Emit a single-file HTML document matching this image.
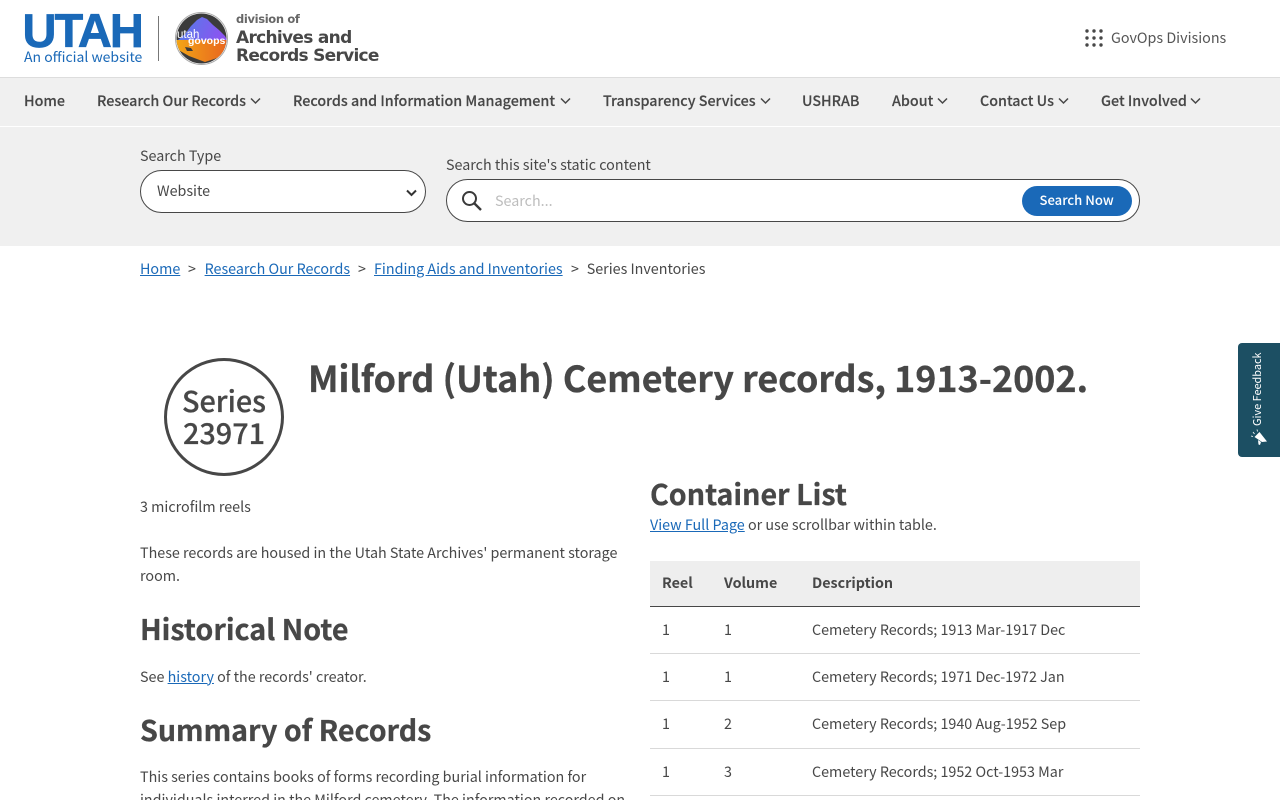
<!DOCTYPE html>
<html lang="en"><head><meta charset="utf-8"><title>Milford (Utah) Cemetery records, 1913-2002.</title>
<style>
html,body{margin:0;padding:0;background:#fff;width:1280px;height:800px;overflow:hidden}
body{position:relative;font-family:"Noto Sans CJK JP","Liberation Sans",sans-serif;font-size:14.32px;color:#474747}
.t{position:absolute;white-space:nowrap;line-height:24px;height:24px}
a{color:#1a69b8;text-decoration:underline}
.n{font-weight:500;color:#474747;top:89px;-webkit-text-stroke:.15px #474747}
.b{font-weight:700;color:#474747;-webkit-text-stroke:.3px #474747}
.box{position:absolute}
svg{position:absolute;overflow:visible}
.l{position:absolute;height:1px;left:650px;width:490px;background:#d9d9d9}
</style></head><body>
<div class="t" style="left:22.5px;top:8px;font:700 47px/46px 'Liberation Sans',sans-serif;height:46px;color:#1a69b8;letter-spacing:-1.9px;-webkit-text-stroke:.7px #1a69b8">UTAH</div>
<div class="t" style="left:24px;top:45px;color:#1a69b8;font-size:14px">An official website</div>
<div class="box" style="left:158px;top:16px;width:1px;height:45px;background:#777"></div>
<svg style="left:175px;top:12px" width="53" height="53" viewBox="0 0 53 53">
<defs><clipPath id="c"><circle cx="26.5" cy="26.5" r="25"/></clipPath><linearGradient id="g" x1="0" y1="0" x2="1" y2="0.2"><stop offset="0" stop-color="#4f7fe8"/><stop offset="1" stop-color="#8a55f0"/></linearGradient><linearGradient id="o" x1="0" y1="0" x2="1" y2="0"><stop offset="0" stop-color="#f3a716"/><stop offset="1" stop-color="#e8641f"/></linearGradient></defs>
<circle cx="26.5" cy="26.5" r="26" fill="#fff" stroke="#aaa" stroke-width="1"/>
<g clip-path="url(#c)"><rect width="53" height="53" fill="#3b3b3b"/>
<path d="M3 28L10 22 16 14 22 8 27 5 32 7 38 13 44 18 50 24 52 28Z" fill="url(#g)"/>
<path d="M0 28H53V39L42 46 30 50 14 44 0 36Z" fill="url(#o)"/>
<path d="M10 35l6 1 2 3-6 0z" fill="#3b3b3b"/></g></svg>
<div class="t" style="left:177px;top:28px;font:400 11.500px/14px 'Liberation Sans',sans-serif;height:14px;color:#fff">utah</div>
<div class="t" style="left:188px;top:34px;font:700 10.500px/14px 'Liberation Sans',sans-serif;height:14px;color:#fff">govops</div>
<div class="t" style="left:236px;top:12px;font:700 11.500px/15px 'DejaVu Sans',sans-serif;height:15px;color:#666;letter-spacing:-.35px">division of</div>
<div class="t" style="left:236px;top:28px;font:700 17px/20px 'DejaVu Sans',sans-serif;height:20px;color:#474747;letter-spacing:-.7px">Archives and</div>
<div class="t" style="left:236px;top:46px;font:700 17px/20px 'DejaVu Sans',sans-serif;height:20px;color:#474747;letter-spacing:-.73px">Records Service</div>
<svg style="left:1085px;top:29px" width="18" height="18" fill="#474747"><circle cx="2" cy="2" r="1.7"/><circle cx="9" cy="2" r="1.7"/><circle cx="16" cy="2" r="1.7"/><circle cx="2" cy="9" r="1.7"/><circle cx="9" cy="9" r="1.7"/><circle cx="16" cy="9" r="1.7"/><circle cx="2" cy="16" r="1.7"/><circle cx="9" cy="16" r="1.7"/><circle cx="16" cy="16" r="1.7"/></svg>
<div class="t" style="left:1111px;top:26px;color:#555">GovOps Divisions</div>

<div class="box" style="left:0;top:77px;width:1280px;height:49px;background:#f0f0f0;border-top:1px solid #ddd;box-sizing:border-box"></div>
<div class="box" style="left:0;top:127px;width:1280px;height:119px;background:#f0f0f0"></div>
<div class="t n" style="left:24px">Home</div>
<div class="t n" style="left:97px">Research Our Records</div>
<svg style="left:250px;top:97px" width="11" height="8" fill="none" stroke="#474747" stroke-width="1.5"><path d="M1 1.500l4.500 4.500 4.500-4.500"/></svg>
<div class="t n" style="left:293px">Records and Information Management</div>
<svg style="left:560px;top:97px" width="11" height="8" fill="none" stroke="#474747" stroke-width="1.5"><path d="M1 1.500l4.500 4.500 4.500-4.500"/></svg>
<div class="t n" style="left:603px">Transparency Services</div>
<svg style="left:760px;top:97px" width="11" height="8" fill="none" stroke="#474747" stroke-width="1.5"><path d="M1 1.500l4.500 4.500 4.500-4.500"/></svg>
<div class="t n" style="left:802px">USHRAB</div>
<div class="t n" style="left:892px">About</div>
<svg style="left:937px;top:97px" width="11" height="8" fill="none" stroke="#474747" stroke-width="1.5"><path d="M1 1.500l4.500 4.500 4.500-4.500"/></svg>
<div class="t n" style="left:980px">Contact Us</div>
<svg style="left:1058px;top:97px" width="11" height="8" fill="none" stroke="#474747" stroke-width="1.5"><path d="M1 1.500l4.500 4.500 4.500-4.500"/></svg>
<div class="t n" style="left:1101px">Get Involved</div>
<svg style="left:1190px;top:97px" width="11" height="8" fill="none" stroke="#474747" stroke-width="1.5"><path d="M1 1.500l4.500 4.500 4.500-4.500"/></svg>

<div class="t" style="left:140px;top:144px">Search Type</div>
<div class="box" style="left:140px;top:170px;width:286px;height:43px;box-sizing:border-box;background:#fff;border:1px solid #474747;border-radius:22px"></div>
<div class="t" style="left:157px;top:179px">Website</div>
<svg style="left:406px;top:189px" width="11" height="8" fill="none" stroke="#333" stroke-width="2"><path d="M1 1.500l4.500 4.500 4.500-4.500"/></svg>
<div class="t" style="left:446px;top:153px">Search this site's static content</div>
<div class="box" style="left:446px;top:179px;width:694px;height:43px;box-sizing:border-box;background:#fff;border:1px solid #474747;border-radius:22px"></div>
<svg style="left:461px;top:190px" width="22" height="22" fill="none" stroke="#3a3a3a" stroke-width="2"><circle cx="8.500" cy="8.500" r="6.500"/><path d="M13.500 13.500l6.500 6.500" stroke-width="2.400"/></svg>
<div class="t" style="left:495px;top:189px;color:#bdbdbd">Search...</div>
<div class="box" style="left:1022px;top:186px;width:110px;height:30px;border-radius:15px;background:#1a69b8"></div>
<div class="t" style="left:1039.500px;top:188px;color:#fff;font-weight:500;font-size:13.100px">Search Now</div>

<div class="t" style="left:140px;top:257px"><a href="#">Home</a></div>
<div class="t" style="left:188px;top:257px">&gt;</div>
<div class="t" style="left:204.600px;top:257px"><a href="#">Research Our Records</a></div>
<div class="t" style="left:358px;top:257px">&gt;</div>
<div class="t" style="left:374px;top:257px"><a href="#">Finding Aids and Inventories</a></div>
<div class="t" style="left:571px;top:257px">&gt;</div>
<div class="t" style="left:586.700px;top:257px">Series Inventories</div>

<div class="box" style="left:164px;top:358px;width:120px;height:118px;box-sizing:border-box;border:3px solid #474747;border-radius:50%"></div>
<div class="t" style="left:164px;width:120px;text-align:center;top:385px;font-size:28.800px;line-height:32px;height:32px;font-weight:500;-webkit-text-stroke:.25px #474747">Series</div>
<div class="t" style="left:164px;width:120px;text-align:center;top:417px;font-size:28.800px;line-height:32px;height:32px;font-weight:500;-webkit-text-stroke:.25px #474747">23971</div>
<div class="t b" style="left:308px;top:353px;font-size:35.850px;line-height:48px;height:48px">Milford (Utah) Cemetery records, 1913-2002.</div>

<div class="t" style="left:140px;top:495px">3 microfilm reels</div>
<div class="t" style="left:140px;top:541px">These records are housed in the Utah State Archives' permanent storage</div>
<div class="t" style="left:140px;top:564px">room.</div>
<div class="t b" style="left:140px;top:609px;font-size:28.650px;line-height:40px;height:40px">Historical Note</div>
<div class="t" style="left:140px;top:665px">See <a href="#">history</a> of the records' creator.</div>
<div class="t b" style="left:140px;top:710px;font-size:28.600px;line-height:40px;height:40px">Summary of Records</div>
<div class="t" style="left:140px;top:765px">This series contains books of forms recording burial information for</div>
<div class="t" style="left:140px;top:788px">individuals interred in the Milford cemetery. The information recorded on</div>

<div class="t b" style="left:650px;top:474px;font-size:28.650px;line-height:40px;height:40px">Container List</div>
<div class="t" style="left:650px;top:513px"><a href="#">View Full Page</a> or use scrollbar within table.</div>
<div class="box" style="left:650px;top:561px;width:490px;height:46px;background:#eee;border-bottom:1px solid #474747;box-sizing:border-box"></div>
<div class="t" style="left:662px;top:571px;font-weight:700">Reel</div>
<div class="t" style="left:724px;top:571px;font-weight:700">Volume</div>
<div class="t" style="left:812px;top:571px;font-weight:700">Description</div>
<div class="t" style="left:662px;top:618px">1</div><div class="t" style="left:724px;top:618px">1</div><div class="t" style="left:812px;top:618px">Cemetery Records; 1913 Mar-1917 Dec</div>
<div class="l" style="top:653px"></div>
<div class="t" style="left:662px;top:665px">1</div><div class="t" style="left:724px;top:665px">1</div><div class="t" style="left:812px;top:665px">Cemetery Records; 1971 Dec-1972 Jan</div>
<div class="l" style="top:700px"></div>
<div class="t" style="left:662px;top:712px">1</div><div class="t" style="left:724px;top:712px">2</div><div class="t" style="left:812px;top:712px">Cemetery Records; 1940 Aug-1952 Sep</div>
<div class="l" style="top:748px"></div>
<div class="t" style="left:662px;top:760px">1</div><div class="t" style="left:724px;top:760px">3</div><div class="t" style="left:812px;top:760px">Cemetery Records; 1952 Oct-1953 Mar</div>
<div class="l" style="top:795px"></div>

<div class="box" style="left:1238px;top:343px;width:42px;height:114px;background:#1c4f63;border-radius:4px 0 0 4px"></div>
<div class="t" style="left:1257px;top:426px;color:#fff;font-size:10.900px;line-height:16px;height:16px;transform-origin:0 0;transform:rotate(-90deg) translateY(-8px)">Give Feedback</div>
<svg style="left:1250px;top:428px" width="18" height="17" fill="#fff"><path d="M4.500 9L9.500 4 17 13.500 12 14Z"/><path d="M8 12l3 2-1 3-1.500-.5z"/><path d="M3 4l1.500 2M1 8l2 .5M7 1.500l.5 2" stroke="#fff" stroke-width=".8" fill="none"/></svg>
</body></html>
